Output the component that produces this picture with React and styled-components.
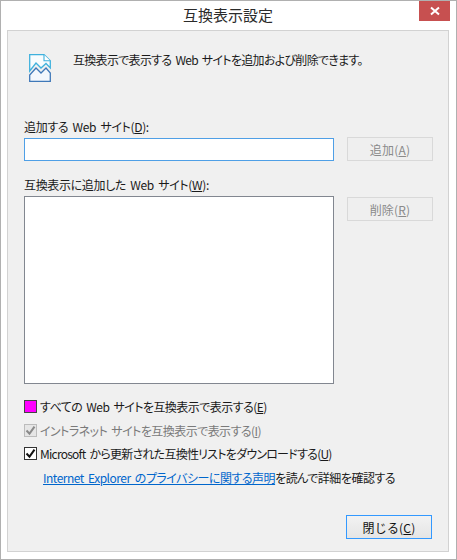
import React from "react";
import styled, { createGlobalStyle } from "styled-components";

const Global = createGlobalStyle`
  html, body { margin: 0; padding: 0; background: #fff; }
  body {
    font-family: "Noto Sans CJK JP", "Noto Sans", sans-serif; font-size: 12px; color: #1a1a1a;
    font-feature-settings: "palt" 1; word-spacing: 2px; letter-spacing: -0.5px;
  }
`;
const Window = styled.div`
  width: 457px; height: 560px; box-sizing: border-box;
  border: 1px solid #b0b0b0; background: #fff;
  padding: 0 7px 7px 6px; display: flex; flex-direction: column; position: relative;
`;
const TitleBar = styled.div`
  height: 29px; flex: none; display: flex; align-items: center; justify-content: center;
  font-size: 15px; color: #2b2b2b; padding-bottom: 3px; box-sizing: border-box;
  font-feature-settings: normal; letter-spacing: 0;
`;
const CloseX = styled.div`
  position: absolute; top: 0; right: 6px; width: 31px; height: 20px; background: #c75050;
  display: flex; align-items: center; justify-content: center;
`;
const Panel = styled.div`
  flex: 1; border: 1px solid #d2d2d2; background: #f0f0f0; padding: 0 16px 12px 16px;
  display: flex; flex-direction: column; box-sizing: border-box;
`;
const Intro = styled.div`
  display: flex; gap: 22px; height: 88px; box-sizing: border-box; padding: 23px 0 0 5px; align-items: flex-start;
`;
const IntroText = styled.div`
  line-height: 16px; margin-top: -2px; letter-spacing: -0.7px;
`;
const FormRow = styled.div`
  display: grid; grid-template-columns: 310px 86px; column-gap: 13px; align-items: start;
`;
const Label = styled.div`
  grid-column: 1 / -1; line-height: 16px; height: 16px; letter-spacing: -0.35px;
  margin-top: ${(p) => p.$top}px; margin-bottom: ${(p) => p.$bottom}px;
`;
const TextInput = styled.div`
  height: 23px; box-sizing: border-box; background: #fff; border: 1px solid #4f9fe6;
`;
const ListBox = styled.div`
  height: 188px; box-sizing: border-box; background: #fff; border: 1px solid #828790;
`;
const DisabledButton = styled.div`
  height: 24px; box-sizing: border-box; border: 1px solid #d9d9d9; background: #efefef;
  display: flex; align-items: center; justify-content: center; color: #8a8a8a;
  letter-spacing: 0.2px; font-feature-settings: normal;
  margin-top: ${(p) => p.$top}px;
`;
const Options = styled.div`
  display: flex; flex-direction: column; margin-top: 11px;
`;
const Option = styled.div`
  display: flex; align-items: center; gap: 3px; height: 23.5px;
  color: ${(p) => (p.$disabled ? "#7a7a7a" : "#1a1a1a")};
  letter-spacing: ${(p) => (p.$tight ? "-0.75px" : "-0.55px")};
`;
const Box = styled.div`
  width: 13px; height: 13px; box-sizing: border-box; flex: none; display: flex; align-items: center; justify-content: center;
  background: ${(p) => p.$fill || "#fff"};
  border: 1px solid ${(p) => p.$line || "#333"};
`;
const Note = styled.div`
  margin: 4px 0 0 19px; line-height: 16px;
`;
const Link = styled.a`
  color: #0066cc; text-decoration: underline;
`;
const Footer = styled.div`
  margin-top: auto; display: flex; justify-content: flex-end;
`;
const CloseButton = styled.div`
  width: 86px; height: 24px; box-sizing: border-box; border: 1px solid #3399ff;
  background: linear-gradient(#f2f2f2, #e5e5e5);
  display: flex; align-items: center; justify-content: center; color: #111;
  letter-spacing: 0.2px; font-feature-settings: normal;
`;
const Key = styled.span`
  text-decoration: underline;
`;

const FileIcon = () => (
  <svg width="22" height="28" viewBox="0 0 22 28" fill="none">
    <path d="M.7 17V.7H15l6.3 6V14L17 9.5 12 14 7 9z" fill="#f8fcfe" stroke="#3fb1dd" strokeWidth="1.3" />
    <path d="M15 .7v6h6.3" fill="#fff" stroke="#3fb1dd" strokeWidth="1.1" />
    <path d="M.7 21L7 14l5 5 5-5 4.3 5v8.3H.7z" fill="#f3f7fc" stroke="#3f78b8" strokeWidth="1.3" />
  </svg>
);
const Check = ({ color }) => (
  <svg width="11" height="11" viewBox="0 0 11 11" fill="none">
    <path d="M1.5 5.5l3 3.2 5-7" stroke={color} strokeWidth="2" />
  </svg>
);

export default function App() {
  return (
    <>
      <Global />
      <Window>
        <TitleBar>互換表示設定</TitleBar>
        <CloseX>
          <svg width="10" height="10" viewBox="0 0 10 10"><path d="M1 1.5l8 7M9 1.5l-8 7" stroke="#fff" strokeWidth="2" /></svg>
        </CloseX>
        <Panel>
          <Intro>
            <FileIcon />
            <IntroText>互換表示で表示する Web サイトを追加および削除できます。</IntroText>
          </Intro>
          <FormRow>
            <Label $top={0} $bottom={3}>追加する Web サイト(<Key>D</Key>):</Label>
            <TextInput />
            <DisabledButton $top={-1}>追加(<Key>A</Key>)</DisabledButton>
            <Label $top={16} $bottom={3}>互換表示に追加した Web サイト(<Key>W</Key>):</Label>
            <ListBox />
            <DisabledButton $top={1}>削除(<Key>R</Key>)</DisabledButton>
          </FormRow>
          <Options>
            <Option>
              <Box $fill="#ff00ff" $line="#444" />
              <span>すべての Web サイトを互換表示で表示する(<Key>E</Key>)</span>
            </Option>
            <Option $disabled>
              <Box $fill="#e6e6e6" $line="#bcbcbc"><Check color="#8a8a8a" /></Box>
              <span>イントラネット サイトを互換表示で表示する(<Key>I</Key>)</span>
            </Option>
            <Option $tight>
              <Box><Check color="#111" /></Box>
              <span>Microsoft から更新された互換性リストをダウンロードする(<Key>U</Key>)</span>
            </Option>
          </Options>
          <Note><Link>Internet Explorer のプライバシーに関する声明</Link>を読んで詳細を確認する</Note>
          <Footer>
            <CloseButton>閉じる(<Key>C</Key>)</CloseButton>
          </Footer>
        </Panel>
      </Window>
    </>
  );
}
